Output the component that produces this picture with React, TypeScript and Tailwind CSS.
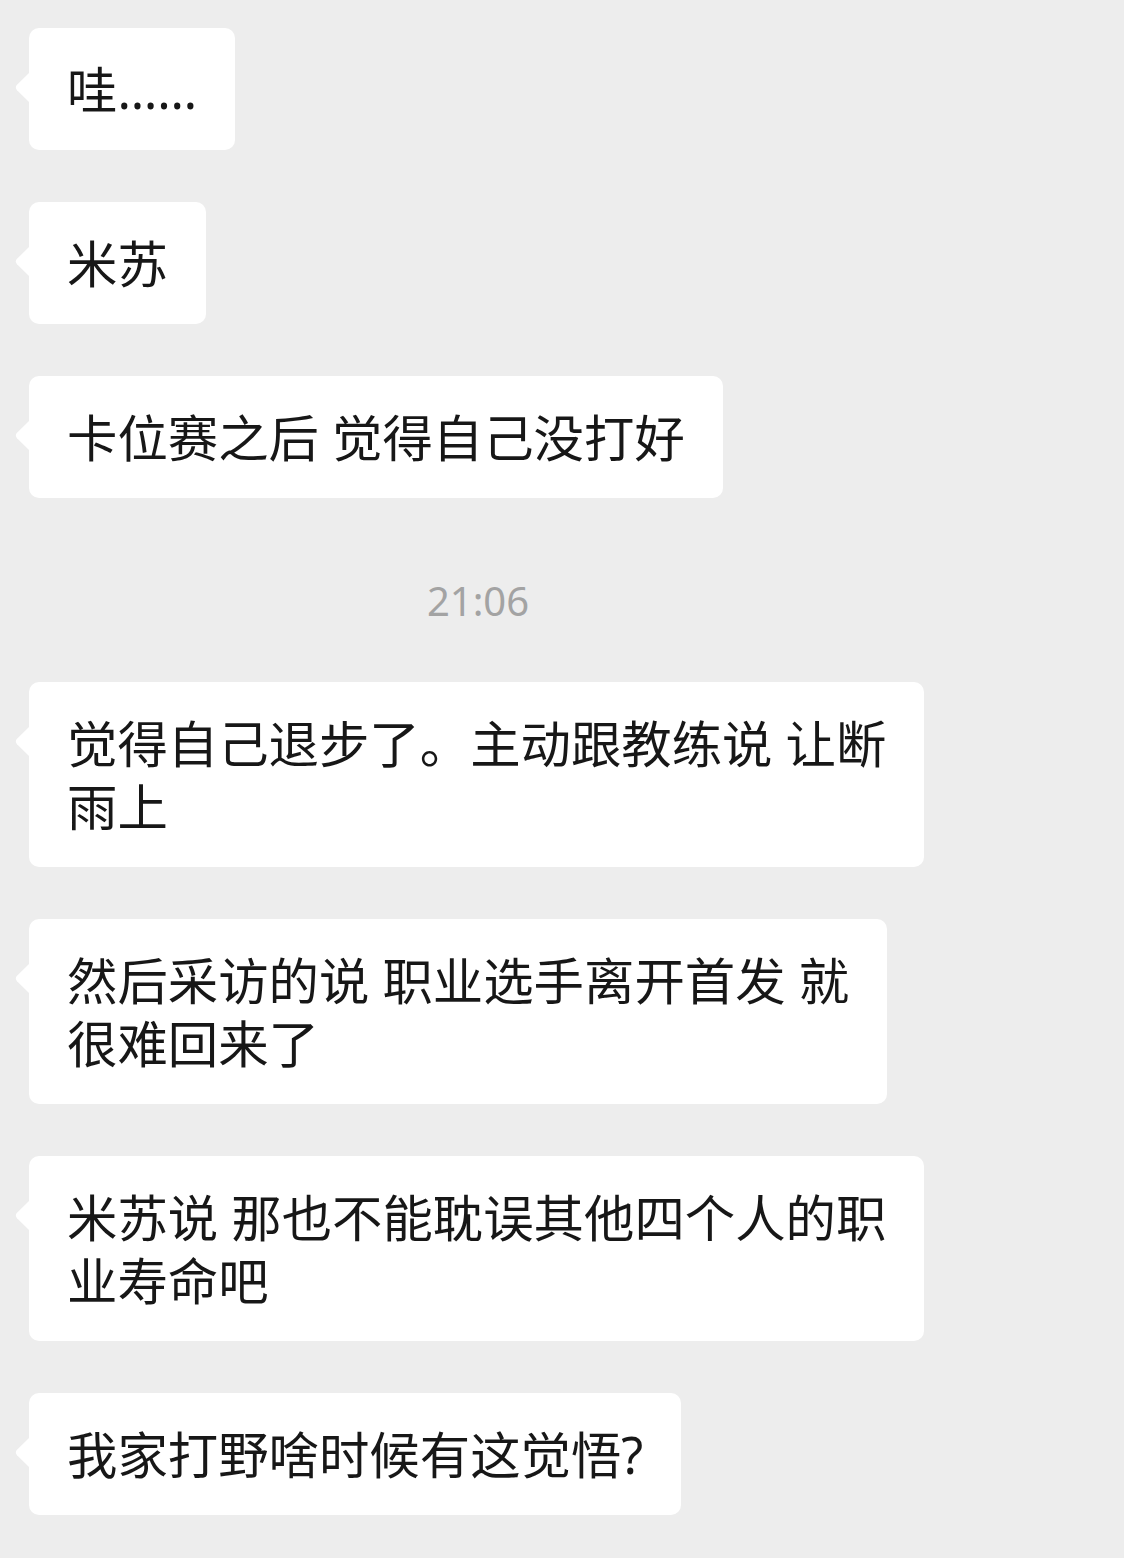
import React from "react";

type Item = { kind: "msg"; lines: string[] } | { kind: "time"; text: string };

const items: Item[] = [
  { kind: "msg", lines: ["哇……"] },
  { kind: "msg", lines: ["米苏"] },
  { kind: "msg", lines: ["卡位赛之后 觉得自己没打好"] },
  { kind: "time", text: "21:06" },
  { kind: "msg", lines: ["觉得自己退步了。主动跟教练说 让断", "雨上"] },
  { kind: "msg", lines: ["然后采访的说 职业选手离开首发 就", "很难回来了"] },
  { kind: "msg", lines: ["米苏说 那也不能耽误其他四个人的职", "业寿命吧"] },
  { kind: "msg", lines: ["我家打野啥时候有这觉悟?"] },
];

function Bubble({ lines }: { lines: string[] }): React.ReactElement {
  return (
    <div className="relative w-fit rounded-[10px] bg-white px-[38px] pt-[30px] pb-[29px]">
      <svg
        className="absolute left-[-15px] top-[44px]"
        width="16"
        height="31"
        viewBox="0 0 16 31"
      >
        <path d="M16 0 L3 12.8 Q0.6 15.5 3 18.2 L16 31 Z" fill="#ffffff" />
      </svg>
      {lines.map((l, i) => (
        <p key={i} className="whitespace-pre text-[50.4px] leading-[63px] text-[#171717]">
          {l}
        </p>
      ))}
    </div>
  );
}

export default function App(): React.ReactElement {
  return (
    <div
      className="min-h-[1558px] w-[1124px] bg-[#ededed] pl-[29px] pt-[28px] pb-[43px]"
      style={{ fontFamily: '"Noto Sans", "Noto Sans CJK SC", sans-serif' }}
    >
      <div className="flex flex-col items-start gap-[52px]">
        {items.map((it, i) =>
          it.kind === "msg" ? (
            <Bubble key={i} lines={it.lines} />
          ) : (
            <div
              key={i}
              className="w-[898px] pt-[26px] pb-[4px] text-center text-[40px] leading-[50px] text-[#a3a3a3]"
            >
              {it.text}
            </div>
          )
        )}
      </div>
    </div>
  );
}
